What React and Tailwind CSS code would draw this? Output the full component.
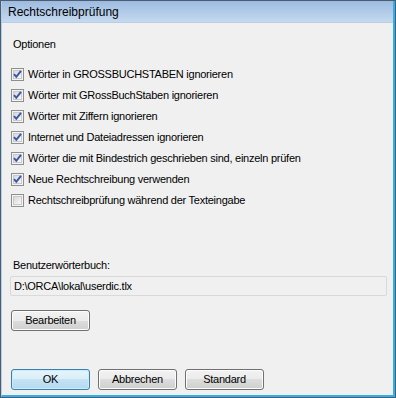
import React from "react";

function Check({ checked }) {
  return (
    <svg width="13" height="13" viewBox="0 0 13 13" className="shrink-0">
      <defs>
        <linearGradient id={checked ? "cbg1" : "cbg0"} x1="0" y1="0" x2="1" y2="1">
          <stop offset="0" stopColor="#d6d6d6" />
          <stop offset="1" stopColor="#fbfbfb" />
        </linearGradient>
      </defs>
      <rect x="0.5" y="0.5" width="12" height="12" fill="#f4f4f4" stroke="#8e8f8f" />
      <rect x="2.5" y="2.5" width="8" height="8" fill={`url(#${checked ? "cbg1" : "cbg0"})`} stroke="#c9c9c9" />
      {checked && (
        <path
          d="M3 6.2 L5.3 8.8 L10 2.8"
          fill="none"
          stroke="#3b58a8"
          strokeWidth="2"
          strokeLinejoin="miter"
        />
      )}
    </svg>
  );
}

function Row({ checked = true, children }) {
  return (
    <div className="flex items-center h-[21px] pl-[9px] gap-[4px]">
      <Check checked={checked} />
      <span>{children}</span>
    </div>
  );
}

function Btn({ children, def }) {
  return (
    <div
      className={
        "w-[79px] h-[21px] rounded-[3px] border flex items-center justify-center " +
        (def
          ? "border-[#3c7fb1] bg-[linear-gradient(#e5f4fb_0%,#dbeef8_50%,#c4e3f3_50%,#b6d9ee_100%)] shadow-[inset_0_0_0_1px_#c8eefc]"
          : "border-[#707070] bg-[linear-gradient(#f2f2f2_0%,#ebebeb_50%,#dddddd_50%,#cfcfcf_100%)] shadow-[inset_0_0_0_1px_#fcfcfc]")
      }
    >
      {children}
    </div>
  );
}

export default function App() {
  const rows = [
    "Wörter in GROSSBUCHSTABEN ignorieren",
    "Wörter mit GRossBuchStaben ignorieren",
    "Wörter mit Ziffern ignorieren",
    "Internet und Dateiadressen ignorieren",
    "Wörter die mit Bindestrich geschrieben sind, einzeln prüfen",
    "Neue Rechtschreibung verwenden",
  ];
  return (
    <div
      className="w-[396px] h-[398px] flex flex-col border border-[#4c5d70] bg-[#f0f0f0] text-black overflow-hidden"
      style={{ fontFamily: '"Liberation Sans", Arial, sans-serif' }}
    >
      <div className="flex-1 flex flex-col border-r-2 border-b-2 border-[#2fb0e8] border-l border-l-[#b7cde6] min-h-0">
        <div className="h-[22px] shrink-0 flex items-center pl-[6px] text-[12px] bg-[linear-gradient(#9dbbe0,#c5d9ef)] border-b border-[#b8cce4]">
          Rechtschreibprüfung
        </div>
        <div className="flex-1 flex flex-col text-[11px] leading-[13px] tracking-[-0.25px]">
          <div className="pl-[11px] mt-[15px]">Optionen</div>
          <div className="mt-[13px] flex flex-col">
            {rows.map((r) => (
              <Row key={r}>{r}</Row>
            ))}
            <Row checked={false}>Rechtschreibprüfung während der Texteingabe</Row>
          </div>
          <div className="pl-[11px] mt-[48px]">Benutzerwörterbuch:</div>
          <div className="ml-[8px] mr-[6px] mt-[4px] h-[20px] border border-[#d9d9d9] rounded-[2px] flex items-center pl-[3px]">
            D:\ORCA\lokal\userdic.tlx
          </div>
          <div className="ml-[9px] mt-[14px]">
            <Btn>Bearbeiten</Btn>
          </div>
          <div className="ml-[9px] mt-[38px] flex gap-[8px]">
            <Btn def>OK</Btn>
            <Btn>Abbrechen</Btn>
            <Btn>Standard</Btn>
          </div>
        </div>
      </div>
    </div>
  );
}
